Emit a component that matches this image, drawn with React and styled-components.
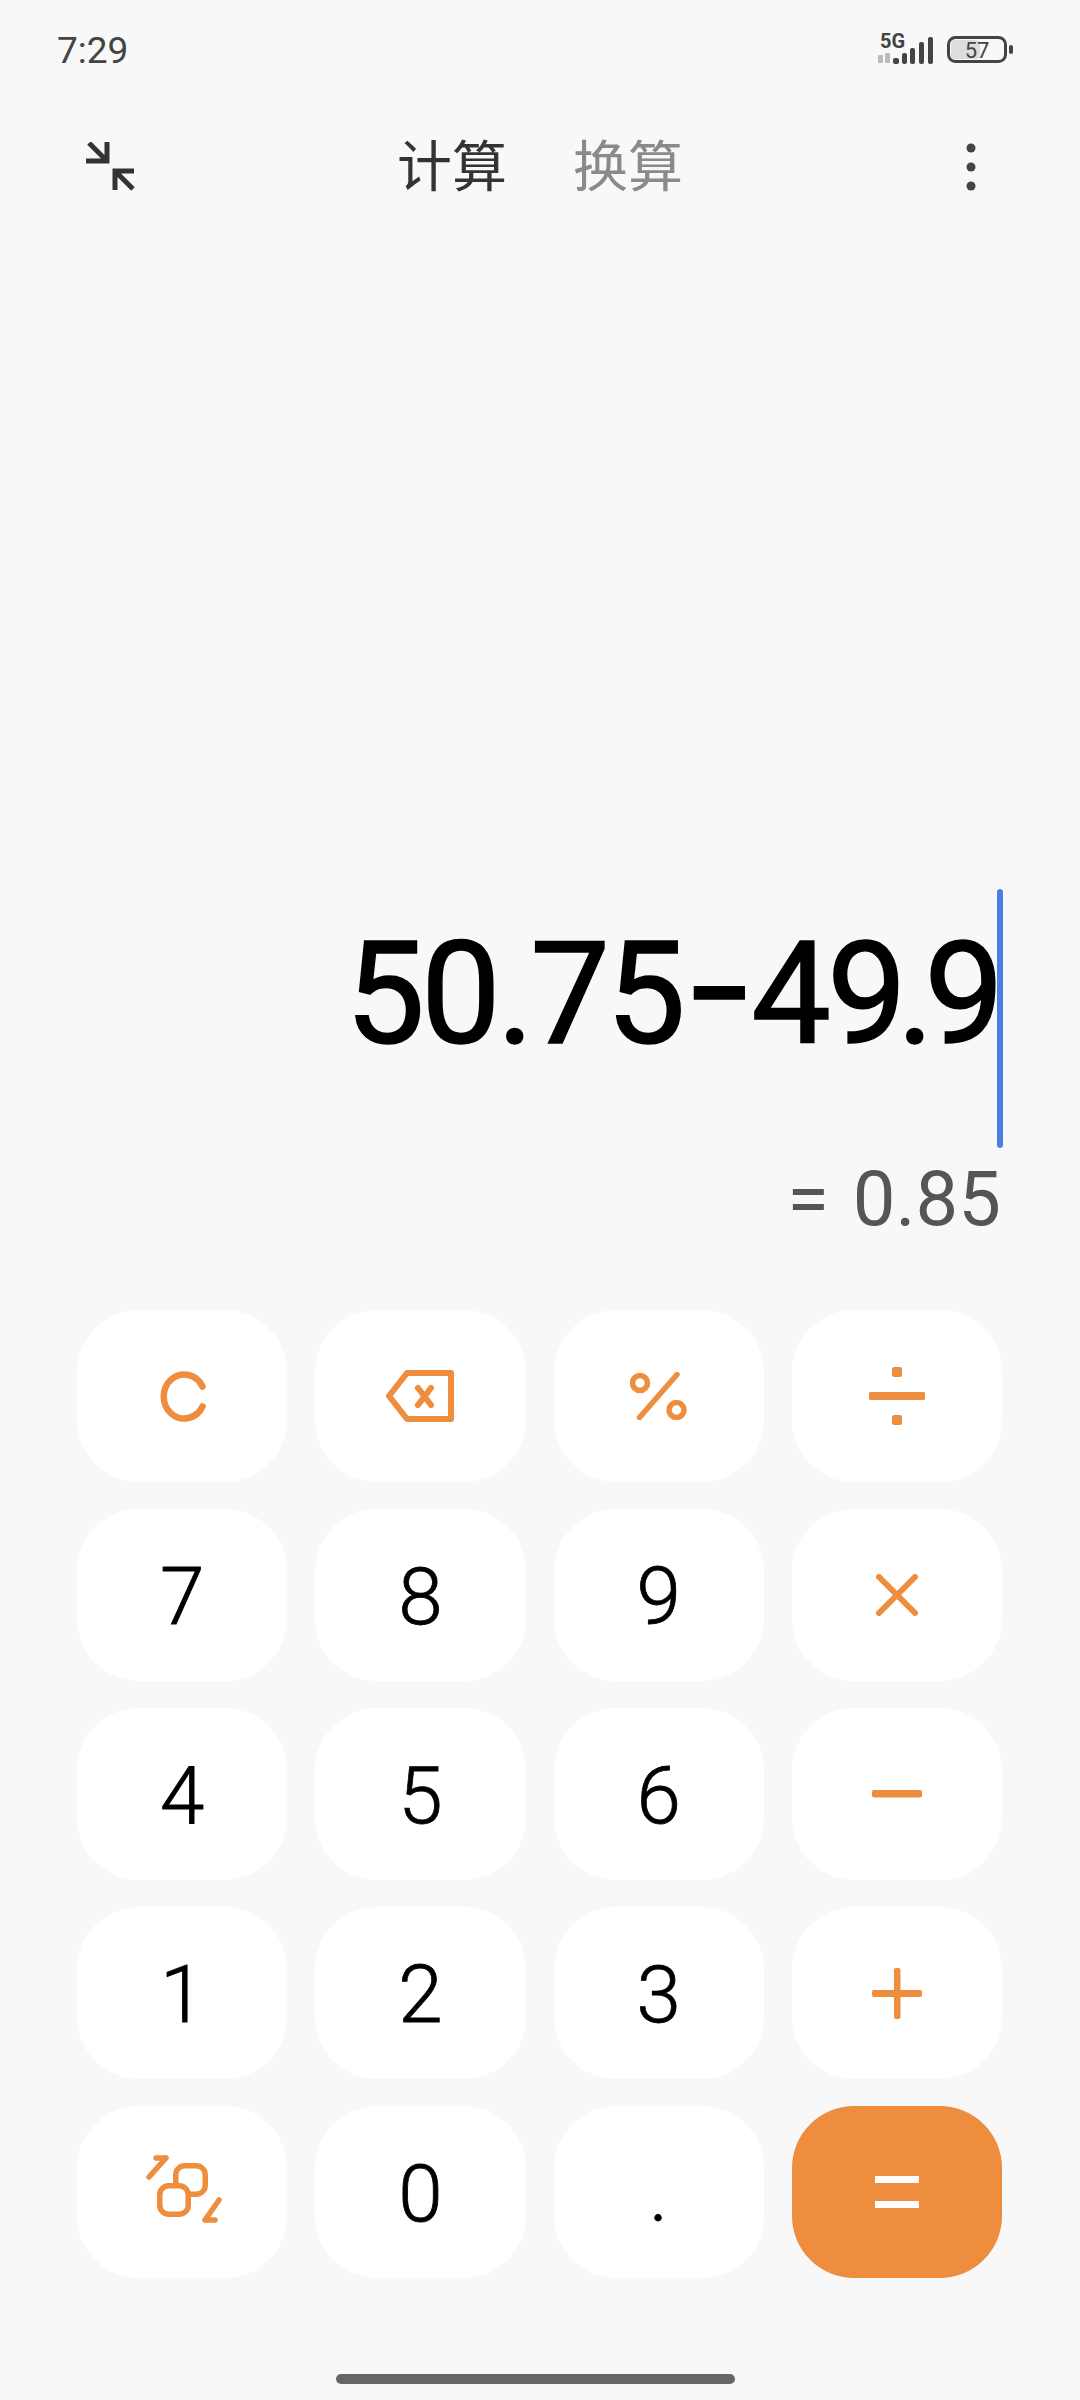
import React from "react";
import styled, { createGlobalStyle } from "styled-components";

const GlobalStyle = createGlobalStyle`
  html, body {
    margin: 0;
    padding: 0;
    background: #f8f8f8;
  }
  body {
    font-family: Roboto, "Noto Sans CJK SC", sans-serif;
  }
`;

const ORANGE = "#ee8d3d";

const Page = styled.div`
  width: 1080px;
  height: 2400px;
  background: #f8f8f8;
  display: flex;
  flex-direction: column;
  overflow: hidden;
`;

const StatusBar = styled.div`
  height: 100px;
  padding: 0 64px 0 57px;
  display: flex;
  align-items: center;
  justify-content: space-between;
`;

const Clock = styled.div`
  font-size: 37px;
  color: #444;
`;

const TopBar = styled.div`
  height: 134px;
  padding: 0 104px 0 86px;
  display: grid;
  grid-template-columns: 1fr auto 1fr;
  align-items: center;
`;

const TopEnd = styled.div`
  display: flex;
  justify-content: flex-end;
`;

const Tabs = styled.div`
  display: flex;
  gap: 66px;
  padding-left: 18px;
`;

const Tab = styled.div`
  font-size: 55px;
  line-height: 64px;
  color: ${(p) => (p.$active ? "#333" : "#8a8a8a")};
`;

const Display = styled.div`
  flex: 1;
  display: flex;
  flex-direction: column;
  align-items: flex-end;
  justify-content: flex-end;
  padding: 0 77px 68px 0;
`;

const ExprRow = styled.div`
  display: flex;
  align-items: center;
  height: 259px;
`;

const Expr = styled.div`
  font-size: 142px;
  line-height: 140px;
  color: #000;
  letter-spacing: -4px;
  -webkit-text-stroke: 1.5px #000;
  padding-bottom: 48px;
  margin-right: -3px;
`;

const Hyphen = styled.span`
  display: inline-block;
  margin: 0 17px;
  transform: translateY(-8px) scale(1.45, 1.15);
`;

const Tight = styled.span`
  letter-spacing: -10px;
`;

const Caret = styled.div`
  width: 6px;
  height: 259px;
  background: #4c80e0;
  border-radius: 3px;
`;

const Result = styled.div`
  margin: 8px 2px 0 0;
  font-size: 76px;
  line-height: 86px;
  word-spacing: 5px;
  color: #555;
`;

const Keypad = styled.div`
  padding: 0 78px 0 77px;
  display: grid;
  grid-template-columns: repeat(4, 1fr);
  grid-auto-rows: 172px;
  gap: 27px 28px;
`;

const Key = styled.div`
  display: flex;
  align-items: center;
  justify-content: center;
  border-radius: 62px;
  font-size: 80px;
  font-weight: 300;
  -webkit-text-stroke: 0.8px #000;
  color: #000;
  padding-top: ${(p) => (p.$digit ? "3px" : "0")};
  box-sizing: border-box;
  background: ${(p) => (p.$accent ? ORANGE : "#fff")};
`;

const HomeZone = styled.div`
  height: 122px;
  display: flex;
  align-items: flex-end;
  padding: 0 0 16px 336px;
  box-sizing: border-box;
`;

const HomeBar = styled.div`
  width: 399px;
  height: 10px;
  border-radius: 5px;
  background: #666;
`;

const CollapseIcon = () => (
  <svg width="50" height="50" viewBox="0 0 50 50" fill="none" stroke="#333" strokeWidth="5">
    <path d="M0 19 H21 V0 M21 19 L3 1" />
    <path d="M48 29 H29 V48 M29 29 L47 47" />
  </svg>
);

const MoreIcon = () => (
  <svg width="10" height="48" viewBox="0 0 10 48" fill="#444">
    <circle cx="5" cy="5" r="4.5" />
    <circle cx="5" cy="24" r="4.5" />
    <circle cx="5" cy="43" r="4.5" />
  </svg>
);

const StatusIcons = () => (
  <svg width="139" height="44" viewBox="0 -6 139 44">
    <text x="3" y="14" fontFamily="Roboto, sans-serif" fontWeight="700" fontSize="20" fill="#444">5G</text>
    <g fill="#bbb">
      <rect x="1" y="21" width="5" height="8" rx="1" />
      <rect x="8" y="19" width="5" height="10" rx="1" />
    </g>
    <g fill="#444">
      <rect x="16" y="24" width="6" height="6" rx="2" />
      <rect x="25" y="19" width="5" height="11" rx="2" />
      <rect x="33" y="14" width="5" height="16" rx="2" />
      <rect x="42" y="8" width="5" height="22" rx="2" />
      <rect x="51" y="3" width="5" height="27" rx="2" />
    </g>
    <rect x="71.5" y="3.5" width="57" height="24" rx="7" fill="none" stroke="#444" strokeWidth="3" />
    <rect x="74" y="6" width="29" height="19" rx="4" fill="#ddd" />
    <rect x="132" y="11" width="4" height="9" rx="2" fill="#444" />
    <text x="100" y="24" textAnchor="middle" fontFamily="Roboto, sans-serif" fontSize="22" fill="#444">57</text>
  </svg>
);

const ClearIcon = () => (
  <svg width="48" height="51" viewBox="0 0 48 51" fill="none" stroke={ORANGE} strokeWidth="6.5" strokeLinecap="round">
    <path d="M44.5 15.5 A20.5 22 0 1 0 44.5 35.5" />
  </svg>
);

const BackspaceIcon = () => (
  <svg width="68" height="52" viewBox="0 0 68 52" fill="none" stroke={ORANGE} strokeWidth="6" strokeLinejoin="round" strokeLinecap="round">
    <path d="M21 3 H65 V49 H21 L3 26 Z" />
    <path d="M32 18 L45 35 M45 18 L32 35" />
  </svg>
);

const PercentIcon = () => (
  <svg width="57" height="48" viewBox="0 0 57 48" fill="none" stroke={ORANGE} strokeWidth="5.5" strokeLinecap="round">
    <circle cx="10" cy="11" r="7.5" />
    <circle cx="46.5" cy="38" r="7.5" />
    <path d="M47 2.5 L9.5 45.5" />
  </svg>
);

const DivideIcon = () => (
  <svg width="56" height="58" viewBox="0 0 56 58" fill={ORANGE}>
    <rect x="23" y="0" width="10" height="10" rx="2" />
    <rect x="0" y="25" width="56" height="8" rx="1.5" />
    <rect x="23" y="48" width="10" height="10" rx="2" />
  </svg>
);

const TimesIcon = () => (
  <svg width="42" height="42" viewBox="0 0 42 42" fill="none" stroke={ORANGE} strokeWidth="6" strokeLinecap="round">
    <path d="M3 3 L39 39 M39 3 L3 39" />
  </svg>
);

const MinusIcon = () => (
  <svg width="50" height="8" viewBox="0 0 50 8" fill={ORANGE}>
    <rect width="50" height="7.5" rx="2" />
  </svg>
);

const PlusIcon = () => (
  <svg width="50" height="51" viewBox="0 0 50 51" fill={ORANGE}>
    <rect x="0" y="22" width="50" height="7" rx="2" />
    <rect x="22" y="0" width="6.5" height="51" rx="2" />
  </svg>
);

const EqualsIcon = () => (
  <svg width="44" height="32" viewBox="0 0 44 32" fill="#fff">
    <rect x="0" y="0" width="44" height="7" />
    <rect x="0" y="25" width="44" height="7" />
  </svg>
);

const SwapIcon = () => (
  <svg width="80" height="76" viewBox="0 0 80 76" fill="none" stroke={ORANGE} strokeWidth="5.5" strokeLinecap="round" strokeLinejoin="round">
    <rect x="33.75" y="11.75" width="29.5" height="28.5" rx="9" />
    <rect x="17.75" y="31.75" width="28.5" height="28.5" rx="9" fill="#fff" />
    <path d="M7 23 L24 4 M14 4 H24" />
    <path d="M77 46 L63 66 H73" />
  </svg>
);

const keys = [
  { icon: <ClearIcon /> },
  { icon: <BackspaceIcon /> },
  { icon: <PercentIcon /> },
  { icon: <DivideIcon /> },
  { label: "7" },
  { label: "8" },
  { label: "9" },
  { icon: <TimesIcon /> },
  { label: "4" },
  { label: "5" },
  { label: "6" },
  { icon: <MinusIcon /> },
  { label: "1" },
  { label: "2" },
  { label: "3" },
  { icon: <PlusIcon /> },
  { icon: <SwapIcon /> },
  { label: "0" },
  { label: "." },
  { icon: <EqualsIcon />, accent: true },
];

export default function App() {
  return (
    <>
      <GlobalStyle />
      <Page>
        <StatusBar>
          <Clock>7:29</Clock>
          <StatusIcons />
        </StatusBar>
        <TopBar>
          <CollapseIcon />
          <Tabs>
            <Tab $active>计算</Tab>
            <Tab>换算</Tab>
          </Tabs>
          <TopEnd>
            <MoreIcon />
          </TopEnd>
        </TopBar>
        <Display>
          <ExprRow>
            <Expr>
              50.75<Hyphen>-</Hyphen>4<Tight>9.</Tight>9
            </Expr>
            <Caret />
          </ExprRow>
          <Result>= 0.85</Result>
        </Display>
        <Keypad>
          {keys.map((k, i) => (
            <Key key={i} $accent={k.accent} $digit={!!k.label}>
              {k.icon || k.label}
            </Key>
          ))}
        </Keypad>
        <HomeZone>
          <HomeBar />
        </HomeZone>
      </Page>
    </>
  );
}
